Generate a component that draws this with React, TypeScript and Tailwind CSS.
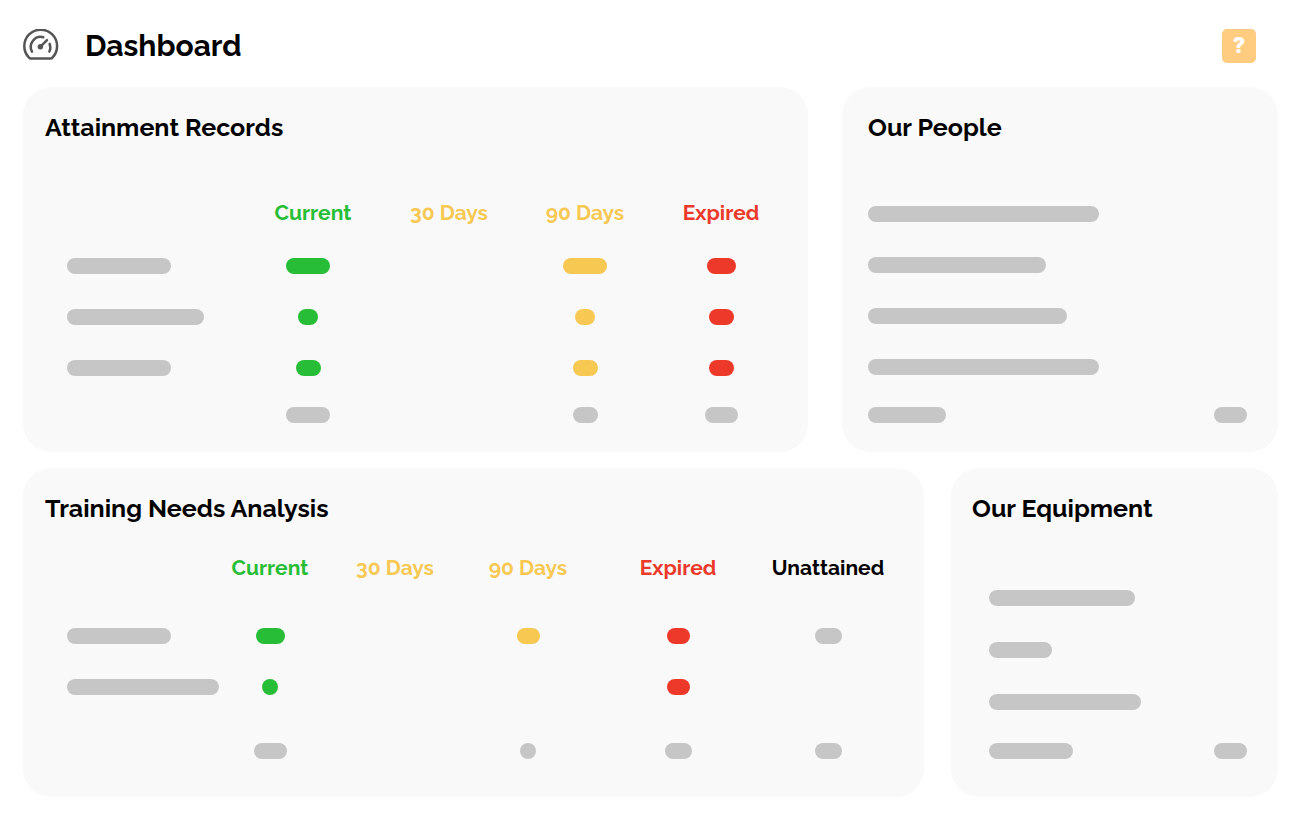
import React from 'react';
import clsx from 'clsx';

type Pill = string | null;

interface Column {
  label: string;
  width: string;
  text: string;
  pill: string;
  cell?: string;
}

interface Row {
  name: string;
  pills: Pill[];
}

const attainmentColumns: Column[] = [
  { label: 'Current', width: 'w-[136px]', text: 'text-[#28bd36]', pill: 'bg-[#28bd36]', cell: 'pr-2.5' },
  { label: '30 Days', width: 'w-[136px]', text: 'text-[#f7c852]', pill: 'bg-[#f7c852]' },
  { label: '90 Days', width: 'w-[136px]', text: 'text-[#f7c852]', pill: 'bg-[#f7c852]' },
  { label: 'Expired', width: 'w-[136px]', text: 'text-[#ec392a]', pill: 'bg-[#ec392a]' },
];

const attainmentRows: Row[] = [
  { name: 'w-[104px]', pills: ['w-11', null, 'w-11', 'w-[29px]'] },
  { name: 'w-[137px]', pills: ['w-5', null, 'w-5', 'w-[25px]'] },
  { name: 'w-[104px]', pills: ['w-[25px]', null, 'w-[25px]', 'w-[25px]'] },
];

const trainingColumns: Column[] = [
  { label: 'Current', width: 'w-[134px]', text: 'text-[#28bd36]', pill: 'bg-[#28bd36]' },
  { label: '30 Days', width: 'w-[116px]', text: 'text-[#f7c852]', pill: 'bg-[#f7c852]' },
  { label: '90 Days', width: 'w-[150px]', text: 'text-[#f7c852]', pill: 'bg-[#f7c852]' },
  { label: 'Expired', width: 'w-[150px]', text: 'text-[#ec392a]', pill: 'bg-[#ec392a]' },
  { label: 'Unattained', width: 'w-[150px]', text: 'text-black', pill: 'bg-[#c6c6c6]' },
];

const trainingRows: Row[] = [
  { name: 'w-[104px]', pills: ['w-[29px]', null, 'w-[23px]', 'w-[23px]', 'w-[27px]'] },
  { name: 'w-[152px]', pills: ['w-4', null, null, 'w-[23px]', null] },
];

const Bar: React.FC<{ className: string }> = ({ className }) => (
  <div className={clsx('h-4 rounded-full', className)} />
);

const Panel: React.FC<{ title: string; className?: string; children: React.ReactNode }> = ({
  title,
  className,
  children,
}) => (
  <section className={clsx('rounded-[28px] bg-[#f9f9f9] pt-6', className)}>
    <h2 className="text-[25px] leading-8 font-bold text-black">{title}</h2>
    {children}
  </section>
);

interface StatusTableProps {
  columns: Column[];
  rows: Row[];
  totals: Pill[];
  className: string;
  headHeight: string;
  footHeight: string;
}

const StatusTable: React.FC<StatusTableProps> = ({ columns, rows, totals, className, headHeight, footHeight }) => (
  <div className={clsx('pl-[22px]', className)}>
    <table className="w-full table-fixed border-collapse">
      <thead>
        <tr className={headHeight}>
          <td />
          {columns.map((column) => (
            <th
              key={column.label}
              scope="col"
              className={clsx('p-0 text-center text-[21px] leading-6 font-bold', column.width, column.text)}
            >
              {column.label}
            </th>
          ))}
        </tr>
      </thead>
      <tbody>
        {rows.map((row, index) => (
          <tr key={index} className="h-[51px]">
            <td className="p-0">
              <Bar className={clsx('bg-[#c6c6c6]', row.name)} />
            </td>
            {row.pills.map((pill, i) => (
              <td key={i} className={clsx('p-0', columns[i].cell)}>
                {pill && <Bar className={clsx('mx-auto', columns[i].pill, pill)} />}
              </td>
            ))}
          </tr>
        ))}
      </tbody>
      <tfoot>
        <tr className={footHeight}>
          <td />
          {totals.map((pill, i) => (
            <td key={i} className={clsx('p-0', columns[i].cell)}>
              {pill && <Bar className={clsx('mx-auto bg-[#c6c6c6]', pill)} />}
            </td>
          ))}
        </tr>
      </tfoot>
    </table>
  </div>
);

interface SummaryListProps {
  bars: string[];
  total: string;
  className: string;
  rowHeight: string;
}

const SummaryList: React.FC<SummaryListProps> = ({ bars, total, className, rowHeight }) => (
  <div className={clsx('pr-[31px]', className)}>
    <ul>
      {bars.map((bar, index) => (
        <li key={index} className={clsx('flex items-center', rowHeight)}>
          <Bar className={clsx('bg-[#c6c6c6]', bar)} />
        </li>
      ))}
    </ul>
    <div className="flex h-[46px] items-center justify-between">
      <Bar className={clsx('bg-[#c6c6c6]', total)} />
      <Bar className="w-[33px] bg-[#c6c6c6]" />
    </div>
  </div>
);

const GaugeIcon: React.FC = () => (
  <svg
    width="36"
    height="34"
    viewBox="0 0 36 34"
    fill="none"
    stroke="#555555"
    strokeWidth="2.5"
    strokeLinecap="round"
    strokeLinejoin="round"
    aria-hidden="true"
  >
    <path d="M8 29.6H27.4Q28.6 29.6 29.4 28.6A16.4 16.4 0 1 0 6 28.6Q6.8 29.6 8 29.6Z" />
    <path d="M9 22.6A10 10 0 0 1 20.3 8.2" />
    <path d="M26.6 14.8A10 10 0 0 1 26.4 22.6" />
    <path d="M17.5 17.6L24 11.2" />
    <circle cx="17.4" cy="17.8" r="1.5" fill="#555555" />
  </svg>
);

const App: React.FC = () => {
  return (
    <div className="min-h-screen bg-white pr-[22px] pb-7 pl-[23px] font-['Raleway','Lato',sans-serif]">
      <header className="flex h-[87px] items-center justify-between pt-1 pr-[22px]">
        <div className="flex items-center gap-[26px]">
          <GaugeIcon />
          <h1 className="text-[30px] leading-10 font-bold text-black">Dashboard</h1>
        </div>
        <button
          type="button"
          aria-label="Help"
          className="flex size-[34px] items-center justify-center rounded-[5px] bg-[#ffcc80] font-['Inter',sans-serif] text-[21px] leading-none font-black text-white"
        >
          ?
        </button>
      </header>

      <main className="flex flex-col gap-4">
        <div className="grid grid-cols-[785fr_436fr] gap-[34px]">
          <Panel title="Attainment Records" className="pr-[19px] pb-[15px] pl-[22px]">
            <StatusTable
              columns={attainmentColumns}
              rows={attainmentRows}
              totals={['w-11', null, 'w-[25px]', 'w-[33px]']}
              className="pt-[43px]"
              headHeight="h-[54px]"
              footHeight="h-11"
            />
          </Panel>
          <Panel title="Our People" className="pl-[26px]">
            <SummaryList
              bars={['w-[231px]', 'w-[178px]', 'w-[199px]', 'w-[231px]']}
              total="w-[78px]"
              className="pt-[45px]"
              rowHeight="h-[51px]"
            />
          </Panel>
        </div>

        <div className="grid grid-cols-[901fr_327fr] gap-[27px]">
          <Panel title="Training Needs Analysis" className="pr-[21px] pb-2 pl-[22px]">
            <StatusTable
              columns={trainingColumns}
              rows={trainingRows}
              totals={['w-[33px]', null, 'w-4', 'w-[27px]', 'w-[27px]']}
              className="pt-0.5"
              headHeight="h-[84px]"
              footHeight="h-[77px]"
            />
          </Panel>
          <Panel title="Our Equipment" className="pl-[21px]">
            <SummaryList
              bars={['w-[146px]', 'w-[63px]', 'w-[152px]']}
              total="w-[84px]"
              className="pt-12 pl-[17px]"
              rowHeight="h-[52px]"
            />
          </Panel>
        </div>
      </main>
    </div>
  );
};

export default App;
